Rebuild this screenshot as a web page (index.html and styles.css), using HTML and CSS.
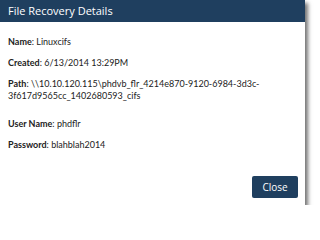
FILE: index.html
```html
<!DOCTYPE html>
<html>
<head>
<meta charset="utf-8">
<link rel="stylesheet" href="styles.css">
</head>
<body>
<div class="dialog">
  <div class="header">File Recovery Details</div>
  <div class="content">
    <p class="row"><b>Name</b>: Linuxcifs</p>
    <p class="row"><b>Created</b>: 6/13/2014 13:29PM</p>
    <p class="row row-path"><b>Path</b>: \\10.10.120.115\phdvb_flr_4214e870-9120-6984-3d3c-3f617d9565cc_1402680593_cifs</p>
    <p class="row"><b>User Name</b>: phdflr</p>
    <p class="row"><b>Password</b>: blahblah2014</p>
  </div>
  <div class="footer">
    <button class="btn">Close</button>
  </div>
</div>
</body>
</html>
```
FILE: styles.css
```css
html, body {
  margin: 0;
  padding: 0;
  background: #ffffff;
}
.dialog {
  width: 305px;
  height: 205px;
  background: #ffffff;
  box-shadow: 3px 3px 4px rgba(0,0,0,0.55);
  display: flex;
  flex-direction: column;
}
.header {
  height: 22px;
  background: #1f3f5f;
  color: #ffffff;
  font-family: "Open Sans", sans-serif;
  font-size: 11px;
  line-height: 22px;
  padding-left: 8px;
  box-sizing: border-box;
}
.content {
  padding: 14px 8px 0 8px;
  font-family: Lato, sans-serif;
  font-size: 9px;
  color: #222222;
  flex: 1;
}
.row {
  margin: 0 0 9px 0;
  line-height: 12px;
}
.row-path {
  margin-bottom: 16px;
}
.row b {
  font-weight: bold;
  color: #222222;
}
.footer {
  display: flex;
  justify-content: flex-end;
  padding: 0 7px 7px 0;
}
.btn {
  width: 46px;
  height: 22px;
  background: #1f3f5f;
  color: #ffffff;
  border: none;
  border-radius: 2px;
  font-family: "Open Sans", sans-serif;
  font-size: 10px;
  padding: 0;
}
```
